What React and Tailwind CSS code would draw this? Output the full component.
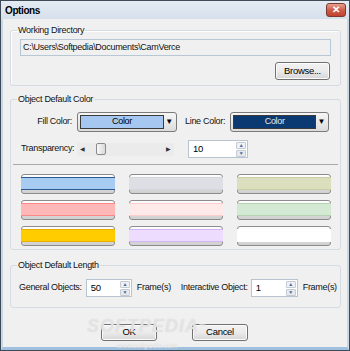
import React from 'react';

const font = { fontFamily: '"Liberation Sans", Arial, sans-serif' };

const swatches = [
  { fill: 'bg-[#a8cbf2]', line: 'border-[#2d5b92]' },
  { fill: 'bg-[#dedfe4]', line: 'border-[#d4d5da]' },
  { fill: 'bg-[#dcdfbe]', line: 'border-[#c9cfa4]' },
  { fill: 'bg-[#ffb8b8]', line: 'border-[#ff8888]' },
  { fill: 'bg-[#ffeaea]', line: 'border-[#ffcdcd]' },
  { fill: 'bg-[#d4e9d3]', line: 'border-[#b5d2b3]' },
  { fill: 'bg-[#ffcc00]', line: 'border-[#e8ad00]' },
  { fill: 'bg-[#eedcff]', line: 'border-[#d2b4f2]' },
  { fill: 'bg-[#ffffff]', line: 'border-[#ffffff]' },
];

function Spin({ value, width }) {
  return (
    <div className={`flex h-[18px] ${width} border border-[#b9c4d1] bg-white`}>
      <div className="flex-1 pl-[4px] leading-[16px] text-[9.5px] text-black">{value}</div>
      <div className="flex w-[12px] flex-col gap-[1px] p-[1px]">
        <div className="flex flex-1 items-center justify-center rounded-[1px] border border-[#c5cbd3] bg-[#eef1f5] text-[5px] leading-none text-[#4a6a9a]">▲</div>
        <div className="flex flex-1 items-center justify-center rounded-[1px] border border-[#c5cbd3] bg-[#e6eaef] text-[5px] leading-none text-[#4a6a9a]">▼</div>
      </div>
    </div>
  );
}

function ColorPick({ color, textColor, width }) {
  return (
    <div className={`flex h-[20px] ${width} items-center rounded-[3px] border border-[#7a7a7a] bg-gradient-to-b from-[#f6f6f6] to-[#dcdcdc] p-[2px]`}>
      <div className={`flex h-full flex-1 items-center justify-center border border-[#3a3a3a] ${color} ${textColor} text-[9px]`}>
        Color
      </div>
      <div className="flex w-[10px] items-center justify-center text-[8px] leading-none text-black">▼</div>
    </div>
  );
}

function Btn({ children, width, height }) {
  return (
    <div className={`flex ${width} ${height} items-center justify-center rounded-[3px] border border-[#707070] bg-gradient-to-b from-[#f2f2f2] via-[#ebebeb] to-[#d6d6d6] text-[9.5px] text-black shadow-[inset_0_0_0_1px_#fcfcfc]`}>
      {children}
    </div>
  );
}

export default function App() {
  return (
    <div
      className="relative flex h-[351px] w-[350px] flex-col overflow-hidden whitespace-nowrap border border-[#3e4a56] bg-[#f0f0f0] tracking-[-0.3px] text-[9px] text-[#111]"
      style={font}
    >
      {/* title bar */}
      <div className="flex h-[18px] items-center justify-between bg-gradient-to-b from-[#e4ebf3] to-[#d6e0eb] pl-[4px] pr-[3px]">
        <span className="text-[10px] font-bold tracking-[-0.4px] text-black">Options</span>
        <div className="flex h-[14px] w-[20px] items-center justify-center rounded-[3px] border border-[#7c3a32] bg-gradient-to-b from-[#e4a091] via-[#cf5d4a] to-[#c0412e] text-[10px] font-bold leading-none text-white">
          ✕
        </div>
      </div>

      <div className="flex flex-1 flex-col border-x-[2px] border-b-[3px] border-x-[#c9d8e7] border-b-[#9fc0de] bg-[#f0f0f0]">
        {/* Working Directory */}
        <fieldset className="ml-[7px] mt-[5px] w-[331px] rounded-[3px] border border-[#d5dbe0] pb-[5px] shadow-[inset_1px_1px_0_#fff]">
          <legend className="ml-[6px] px-[1px] leading-[12px] text-[9px]">Working Directory</legend>
          <div className="ml-[9px] mt-[3px] h-[17px] w-[311px] border border-[#b8c7d6] bg-[#f0f0f0] pl-[2px] leading-[15px] text-[9px]">
            C:\Users\Softpedia\Documents\CamVerce
          </div>
          <div className="ml-[264px] mt-[6px]">
            <Btn width="w-[55px]" height="h-[18px]">Browse...</Btn>
          </div>
        </fieldset>

        {/* Object Default Color */}
        <fieldset className="ml-[7px] mt-[7px] w-[331px] rounded-[3px] border border-[#d5dbe0] pb-[3px]">
          <legend className="ml-[6px] px-[1px] leading-[12px] text-[9px]">Object Default Color</legend>
          <div className="mt-[7px] flex items-center">
            <span className="w-[61px] text-right">Fill Color:</span>
            <div className="ml-[5px]">
              <ColorPick color="bg-[#a6c8f0]" textColor="text-black" width="w-[100px]" />
            </div>
            <span className="ml-[8px]">Line Color:</span>
            <div className="ml-[5px]">
              <ColorPick color="bg-[#0b3a72]" textColor="text-[#e8e8e8]" width="w-[99px]" />
            </div>
          </div>
          <div className="mt-[8px] flex items-center">
            <span className="ml-[10px] w-[51px] text-right">Transparency:</span>
            <div className="ml-[5px] flex h-[13px] w-[97px] items-center bg-[#ebebeb] px-[3px] text-[6px] leading-none text-[#333]">
              <span>◀</span>
              <div className="ml-[11px] h-[12px] w-[10px] rounded-[2px] border border-[#8a8a8a] bg-gradient-to-r from-[#f8f8f8] to-[#dadada]" />
              <span className="ml-auto">▶</span>
            </div>
            <div className="ml-[14px]">
              <Spin value="10" width="w-[60px]" />
            </div>
          </div>
          <div className="mx-[2px] mt-[6px] h-[2px] border-t border-[#a9a9a9] border-b-white" />
          <div className="ml-[10px] mt-[8px] grid grid-cols-[94px_94px_94px] gap-x-[14px] gap-y-[6px]">
            {swatches.map((s, i) => (
              <div
                key={i}
                className="flex h-[20px] flex-col rounded-[3px] border border-[#8c8c8c] bg-gradient-to-b from-[#ffffff] to-[#cfcfcf]"
              >
                <div className="h-[2px]" />
                <div className={`-mx-[1px] h-[13px] border-y ${s.line} ${s.fill}`} />
              </div>
            ))}
          </div>
        </fieldset>

        {/* Object Default Length */}
        <fieldset className="ml-[7px] mt-[9px] w-[331px] rounded-[3px] border border-[#d5dbe0] pb-[10px]">
          <legend className="ml-[6px] px-[1px] leading-[12px] text-[9px]">Object Default Length</legend>
          <div className="mt-[8px] flex items-center">
            <span className="ml-[8px]">General Objects:</span>
            <div className="ml-[4px]">
              <Spin value="50" width="w-[46px]" />
            </div>
            <span className="ml-[5px]">Frame(s)</span>
            <span className="ml-[10px]">Interactive Object:</span>
            <div className="ml-[3px]">
              <Spin value="1" width="w-[47px]" />
            </div>
            <span className="ml-[5px]">Frame(s)</span>
          </div>
        </fieldset>

        <div className="mt-[16px] flex justify-center gap-[35px] pr-[1px]">
          <Btn width="w-[56px]" height="h-[17px]">OK</Btn>
          <Btn width="w-[56px]" height="h-[17px]">Cancel</Btn>
        </div>
      </div>

      {/* watermark */}
      <div className="pointer-events-none absolute left-[86px] top-[315px] flex flex-col items-center">
        <span className="text-[18px] font-bold italic leading-[20px] tracking-[1px] text-white/40 [text-shadow:0_0_1px_#d0d0d0]">
          SOFTPEDIA<sup className="text-[7px]">™</sup>
        </span>
        <span className="mt-[6px] text-[7px] leading-[8px] tracking-[0px] text-white/60 [text-shadow:0_0_1px_#c8c8c8]">www.softpedia.com</span>
      </div>
    </div>
  );
}
